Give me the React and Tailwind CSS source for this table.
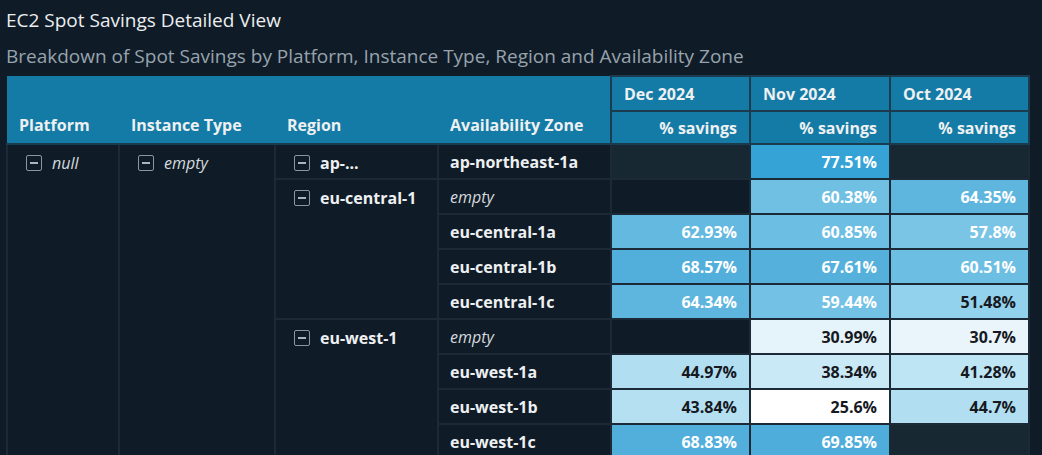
import React from 'react';

const cols = [112, 156, 163, 173, 139, 140, 139];

// each row: [zone, italicZone, dec, nov, oct]
// cell: [value, bg, dark text?] or null (empty) / 'hi' (lighter empty)
const rows = [
  { zone: 'ap-northeast-1a', cells: ['hi', ['77.51%', 'bg-[#36a3d7]'], 'hi'] },
  { zone: 'empty', italic: true, cells: [null, ['60.38%', 'bg-[#70c0e4]'], ['64.35%', 'bg-[#5eb6df]']] },
  { zone: 'eu-central-1a', cells: [['62.93%', 'bg-[#63b9e0]'], ['60.85%', 'bg-[#6cbee3]'], ['57.8%', 'bg-[#7ac5e6]']] },
  { zone: 'eu-central-1b', cells: [['68.57%', 'bg-[#52afdc]'], ['67.61%', 'bg-[#55b1dc]'], ['60.51%', 'bg-[#6cbee3]']] },
  { zone: 'eu-central-1c', cells: [['64.34%', 'bg-[#5eb6df]'], ['59.44%', 'bg-[#73c1e4]'], ['51.48%', 'bg-[#93d2ec]', true]] },
  { zone: 'empty', italic: true, cells: [null, ['30.99%', 'bg-[#e5f4fa]', true], ['30.7%', 'bg-[#e9f5fb]', true]] },
  { zone: 'eu-west-1a', cells: [['44.97%', 'bg-[#b1dff1]', true], ['38.34%', 'bg-[#cae9f6]', true], ['41.28%', 'bg-[#bee5f4]', true]] },
  { zone: 'eu-west-1b', cells: [['43.84%', 'bg-[#b4e0f2]', true], ['25.6%', 'bg-white', true], ['44.7%', 'bg-[#b1dff1]', true]] },
  { zone: 'eu-west-1c', cells: [['68.83%', 'bg-[#52afdc]'], ['69.85%', 'bg-[#4faddb]'], 'hi'] },
];

const regions = { 0: ['ap-...', 1], 1: ['eu-central-1', 4], 5: ['eu-west-1', 4] };

const Toggle = () => (
  <span className="inline-flex items-center justify-center w-[16px] h-[16px] border border-[#8a96a1] rounded-[2px] mr-[10px] shrink-0">
    <span className="block w-[8px] h-[1.5px] bg-[#aab4bd]" />
  </span>
);

const TreeCell = ({ label, italic, rowSpan }) => (
  <td rowSpan={rowSpan} className="align-top border-2 border-[#1b2a36] pl-[18px] pt-[8px]">
    <div className="flex items-center h-[20px]">
      <Toggle />
      <span className={italic ? 'italic font-normal text-[#d5dadf]' : 'font-bold text-[#eef0f2]'}>{label}</span>
    </div>
  </td>
);

const DataCell = ({ cell }) => {
  if (!cell) return <td className="border-2 border-[#1b2a36]" />;
  if (cell === 'hi') return <td className="border-2 border-[#1b2a36] bg-[#172833]" />;
  const [v, bg, dark] = cell;
  return (
    <td className={`border-2 border-[#1b2a36] text-right pr-[12px] font-bold ${bg} ${dark ? 'text-[#16191f]' : 'text-white'}`}>
      {v}
    </td>
  );
};

export default function App() {
  return (
    <div className="w-[1042px] h-[455px] overflow-hidden bg-[#0f1c27]" style={{ fontFamily: '"Open Sans", "Noto Sans", sans-serif' }}>
      <div className="pl-[6px] pt-[7px] text-[19px] leading-[26px] text-[#eceef0]">EC2 Spot Savings Detailed View</div>
      <div className="pl-[6px] mt-[10px] text-[19px] leading-[26px] text-[#98a3ad]">
        Breakdown of Spot Savings by Platform, Instance Type, Region and Availability Zone
      </div>
      <div className="flex mt-[6px] pl-[6px]">
        <table className="table-fixed border-collapse text-[16px]" style={{ width: 1022 }}>
          <colgroup>
            {cols.map((w, i) => (
              <col key={i} style={{ width: w }} />
            ))}
          </colgroup>
          <thead>
            <tr className="h-[35px] bg-[#137ba5] text-[#eef0f2] font-bold">
              {['Platform', 'Instance Type', 'Region', 'Availability Zone'].map((h) => (
                <th key={h} rowSpan={2} className="align-bottom text-left pl-[12px] pb-[6px] border-b-2 border-[#1b3b4e]">
                  {h}
                </th>
              ))}
              {['Dec 2024', 'Nov 2024', 'Oct 2024'].map((h) => (
                <th key={h} className="text-left pl-[12px] border-2 border-[#1b3b4e]">
                  {h}
                </th>
              ))}
            </tr>
            <tr className="h-[33px] bg-[#137ba5] text-[#eef0f2] font-bold">
              {[0, 1, 2].map((i) => (
                <th key={i} className="text-right pr-[12px] border-2 border-[#1b3b4e]">
                  % savings
                </th>
              ))}
            </tr>
          </thead>
          <tbody>
            {rows.map((r, i) => (
              <tr key={i} className="h-[35px]">
                {i === 0 && <TreeCell label="null" italic rowSpan={rows.length} />}
                {i === 0 && <TreeCell label="empty" italic rowSpan={rows.length} />}
                {regions[i] && <TreeCell label={regions[i][0]} rowSpan={regions[i][1]} />}
                <td
                  className={`border-2 border-[#1b2a36] pl-[11px] ${
                    r.italic ? 'italic text-[#d5dadf]' : 'font-bold text-[#eef0f2]'
                  }`}
                >
                  {r.zone}
                </td>
                {r.cells.map((c, j) => (
                  <DataCell key={j} cell={c} />
                ))}
              </tr>
            ))}
          </tbody>
        </table>
      </div>
    </div>
  );
}
